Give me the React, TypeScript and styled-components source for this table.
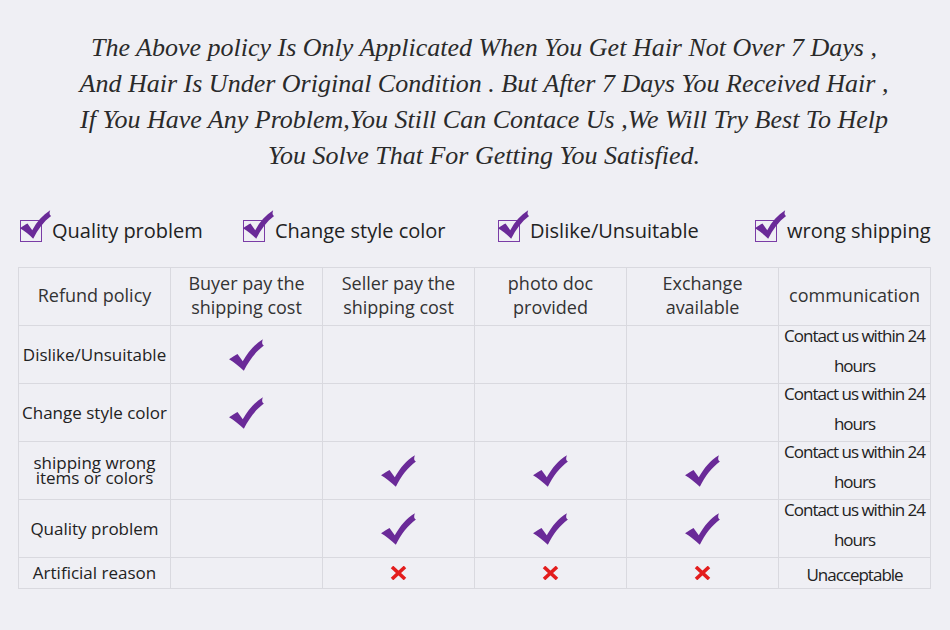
import React from "react";
import styled, { createGlobalStyle } from "styled-components";

const GlobalStyle = createGlobalStyle`
  html, body {
    margin: 0;
    padding: 0;
    background: #efeff4;
  }
  body {
    font-family: "Open Sans", "Liberation Sans", sans-serif;
    color: #222;
  }
`;

const Page = styled.div`
  width: 950px;
  height: 630px;
  overflow: hidden;
  background: #efeff4;
`;

const Notice = styled.p`
  margin: 0;
  padding: 30px 0 0 18px;
  font-family: "Liberation Serif", "Times New Roman", serif;
  font-style: italic;
  font-size: 26px;
  line-height: 36px;
  color: #2a2a2a;
  text-align: center;
`;

const Legend = styled.div`
  display: grid;
  grid-template-columns: 223px 255px 257px auto;
  align-items: center;
  height: 40px;
  margin-top: 36px;
  padding-left: 20px;
`;

const LegendItem = styled.div`
  display: flex;
  align-items: center;
  gap: 10px;
  font-size: 20px;
  color: #222;
`;

const Box = styled.span`
  position: relative;
  width: 20px;
  height: 20px;
  border: 1.5px solid #7a3ca6;
  flex: none;
  margin-top: 2px;
`;

const BoxTick = styled.svg`
  position: absolute;
  left: -2px;
  top: -13px;
  width: 34px;
  height: 33px;
`;

const Table = styled.table`
  margin: 17px 0 0 18px;
  border-collapse: collapse;
  table-layout: fixed;
  width: 913px;
`;

const HeadCell = styled.th`
  height: 53px;
  padding: 0 4px 4px;
  border: 1px solid #d9d9df;
  font-weight: 400;
  font-size: 18px;
  line-height: 24px;
  color: #333;
  text-align: center;
`;

const Cell = styled.td<{ $short?: boolean; $top?: boolean }>`
  height: ${(p) => (p.$short ? "30px" : "57px")};
  padding: 0;
  border: 1px solid #d9d9df;
  text-align: center;
  vertical-align: ${(p) => (p.$top ? "top" : "middle")};
  font-size: 17px;
  color: #222;
`;

const Label = styled.span<{ $tight?: boolean }>`
  display: block;
  line-height: ${(p) => (p.$tight ? "15px" : "22px")};
  padding-bottom: ${(p) => (p.$tight ? "2px" : "0")};
`;

const Contact = styled.span`
  display: block;
  font-size: 17px;
  letter-spacing: -1px;
  line-height: 30px;
  margin: -5px 0 -5px;
`;

const Refusal = styled.span`
  display: block;
  font-size: 17px;
  letter-spacing: -1px;
  line-height: 22px;
  padding-top: 6px;
`;

const TickSvg = styled.svg`
  display: block;
  margin: 0 auto;
  width: 38px;
  height: 34px;
`;

const CrossSvg = styled.svg`
  display: block;
  margin: 0 auto;
  width: 17px;
  height: 14px;
`;

const TICK_PATH =
  "M1 20 C4 18 7 16 9 15 L14 22 C19 13 25 6 33 1 C32 4 32 6 34 7 C26 13 20 21 15 31 C11 27 6 23 1 20 Z";

const Tick = () => (
  <TickSvg viewBox="0 0 36 32">
    <path d={TICK_PATH} fill="#6a2a98" />
  </TickSvg>
);

const Cross = () => (
  <CrossSvg viewBox="0 0 17 14">
    <path d="M2 1 L15 13 M15 1 L2 13" stroke="#e31d1d" strokeWidth="3.6" strokeLinecap="butt" />
  </CrossSvg>
);

const legend = ["Quality problem", "Change style color", "Dislike/Unsuitable", "wrong shipping"];

const headers = [
  "Refund policy",
  "Buyer pay the shipping cost",
  "Seller pay the shipping cost",
  "photo doc provided",
  "Exchange available",
  "communication",
];

type Mark = "tick" | "cross" | null;

const rows: { label: string; tight?: boolean; marks: Mark[]; contact: boolean }[] = [
  { label: "Dislike/Unsuitable", marks: ["tick", null, null, null], contact: true },
  { label: "Change style color", marks: ["tick", null, null, null], contact: true },
  { label: "shipping wrong items or colors", tight: true, marks: [null, "tick", "tick", "tick"], contact: true },
  { label: "Quality problem", marks: [null, "tick", "tick", "tick"], contact: true },
  { label: "Artificial reason", marks: [null, "cross", "cross", "cross"], contact: false },
];

export default function App() {
  return (
    <Page>
      <GlobalStyle />
      <Notice>
        The Above policy Is Only Applicated When You Get Hair Not Over 7 Days ,
        <br />
        And Hair Is Under Original Condition . But After 7 Days You Received Hair ,
        <br />
        If You Have Any Problem,You Still Can Contace Us ,We Will Try Best To Help
        <br />
        You Solve That For Getting You Satisfied.
      </Notice>

      <Legend>
        {legend.map((text) => (
          <LegendItem key={text}>
            <Box>
              <BoxTick viewBox="0 0 36 32">
                <path d={TICK_PATH} fill="#6a2a98" />
              </BoxTick>
            </Box>
            {text}
          </LegendItem>
        ))}
      </Legend>

      <Table>
        <thead>
          <tr>
            {headers.map((h) => (
              <HeadCell key={h}>{h}</HeadCell>
            ))}
          </tr>
        </thead>
        <tbody>
          {rows.map((r) => {
            const short = !r.contact;
            return (
              <tr key={r.label}>
                <Cell $short={short}>
                  <Label $tight={r.tight}>{r.label}</Label>
                </Cell>
                {r.marks.map((m, i) => (
                  <Cell key={i} $short={short}>
                    {m === "tick" && <Tick />}
                    {m === "cross" && <Cross />}
                  </Cell>
                ))}
                <Cell $short={short} $top>
                  {r.contact ? (
                    <Contact>
                      Contact us within 24
                      <br />
                      hours
                    </Contact>
                  ) : (
                    <Refusal>Unacceptable</Refusal>
                  )}
                </Cell>
              </tr>
            );
          })}
        </tbody>
      </Table>
    </Page>
  );
}
